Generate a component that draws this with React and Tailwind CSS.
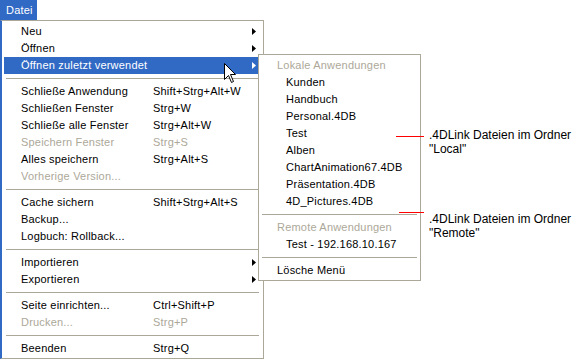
import React from 'react';

const font = { fontFamily: '"Liberation Sans", Arial, sans-serif' };

const mainItems = [
  { label: 'Neu', arrow: true },
  { label: 'Öffnen', arrow: true },
  { label: 'Öffnen zuletzt verwendet', arrow: true, active: true },
  'sep',
  { label: 'Schließe Anwendung', sc: 'Shift+Strg+Alt+W' },
  { label: 'Schließen Fenster', sc: 'Strg+W' },
  { label: 'Schließe alle Fenster', sc: 'Strg+Alt+W' },
  { label: 'Speichern Fenster', sc: 'Strg+S', disabled: true },
  { label: 'Alles speichern', sc: 'Strg+Alt+S' },
  { label: 'Vorherige Version...', disabled: true },
  'sep',
  { label: 'Cache sichern', sc: 'Shift+Strg+Alt+S' },
  { label: 'Backup...' },
  { label: 'Logbuch: Rollback...' },
  'sep',
  { label: 'Importieren', arrow: true },
  { label: 'Exportieren', arrow: true },
  'sep',
  { label: 'Seite einrichten...', sc: 'Ctrl+Shift+P' },
  { label: 'Drucken...', sc: 'Strg+P', disabled: true },
  'sep',
  { label: 'Beenden', sc: 'Strg+Q' },
];

const subItems = [
  { label: 'Lokale Anwendungen', header: true },
  { label: 'Kunden' },
  { label: 'Handbuch' },
  { label: 'Personal.4DB' },
  { label: 'Test' },
  { label: 'Alben' },
  { label: 'ChartAnimation67.4DB' },
  { label: 'Präsentation.4DB' },
  { label: '4D_Pictures.4DB' },
  'sep',
  { label: 'Remote Anwendungen', header: true },
  { label: 'Test - 192.168.10.167' },
  'sep',
  { label: 'Lösche Menü', header: true, plain: true },
];

function Arrow({ white }) {
  return (
    <svg width="4" height="7" viewBox="0 0 4 7" className="block">
      <path d="M0 0 L4 3.5 L0 7 Z" fill={white ? '#ffffff' : '#000000'} />
    </svg>
  );
}

function MainRow({ item }) {
  const color = item.active ? 'text-white' : item.disabled ? 'text-[#aca899]' : 'text-black';
  return (
    <div className={`flex items-center h-[17px] pl-[17px] pr-[5px] ${item.active ? 'bg-[#316ac5]' : ''} ${color}`}>
      <span className="w-[132px] whitespace-nowrap">{item.label}</span>
      <span className="flex-1 whitespace-nowrap">{item.sc}</span>
      {item.arrow && <Arrow white={item.active} />}
    </div>
  );
}

function SubRow({ item }) {
  const color = item.header && !item.plain ? 'text-[#aca899]' : 'text-black';
  return (
    <div className={`flex items-center h-[17px] whitespace-nowrap ${item.header ? 'pl-[16px]' : 'pl-[25px]'} ${color}`}>
      {item.label}
    </div>
  );
}

function Note({ lines }) {
  return (
    <div className="text-[12px] leading-[14px] tracking-normal text-black whitespace-nowrap">
      {lines.map((l) => (
        <div key={l}>{l}</div>
      ))}
    </div>
  );
}

export default function App() {
  return (
    <div className="relative w-[575px] h-[360px] bg-white overflow-hidden text-[11px] tracking-[0.2px]" style={font}>
      {/* Menüleiste */}
      <div className="flex h-[20px]">
        <div className="w-[37px] bg-[#316ac5] text-white pl-[6px] flex items-center">Datei</div>
      </div>

      {/* Hauptmenü */}
      <div className="w-[264px] border border-[#aca899] border-l-2 border-l-[#316ac5] bg-white pt-[2px] pb-[1px] pl-[2px] pr-[2px]">
        {mainItems.map((it, i) =>
          it === 'sep' ? (
            <div key={i} className="h-[9px] flex items-center px-[2px]">
              <div className="w-full h-px bg-[#aca899]" />
            </div>
          ) : (
            <MainRow key={i} item={it} />
          )
        )}
      </div>

      {/* Untermenü */}
      <div className="absolute left-[258px] top-[54px] w-[163px] border border-[#aca899] bg-white pt-[2px] pb-[1px] px-[2px]">
        {subItems.map((it, i) =>
          it === 'sep' ? (
            <div key={i} className="h-[9px] flex items-center px-[1px]">
              <div className="w-full h-px bg-[#aca899]" />
            </div>
          ) : (
            <SubRow key={i} item={it} />
          )
        )}
      </div>

      {/* Mauszeiger */}
      <svg className="absolute left-[224px] top-[63px]" width="13" height="22" viewBox="0 0 13 22">
        <path d="M0.5 0.5 L0.5 16.5 L4.5 12.5 L7.5 19.5 L9.5 18.5 L6.5 11.5 L11.5 11.5 Z" fill="#ffffff" stroke="#000000" strokeWidth="1" />
      </svg>

      {/* Hinweise */}
      <div className="absolute left-[396px] top-[136px] w-[28px] h-px bg-[#ff0000]" />
      <div className="absolute left-[429px] top-[128px]">
        <Note lines={['.4DLink Dateien im Ordner', '"Local"']} />
      </div>
      <div className="absolute left-[399px] top-[212px] w-[25px] h-px bg-[#ff0000]" />
      <div className="absolute left-[429px] top-[212px]">
        <Note lines={['.4DLink Dateien im Ordner', '"Remote"']} />
      </div>
    </div>
  );
}
